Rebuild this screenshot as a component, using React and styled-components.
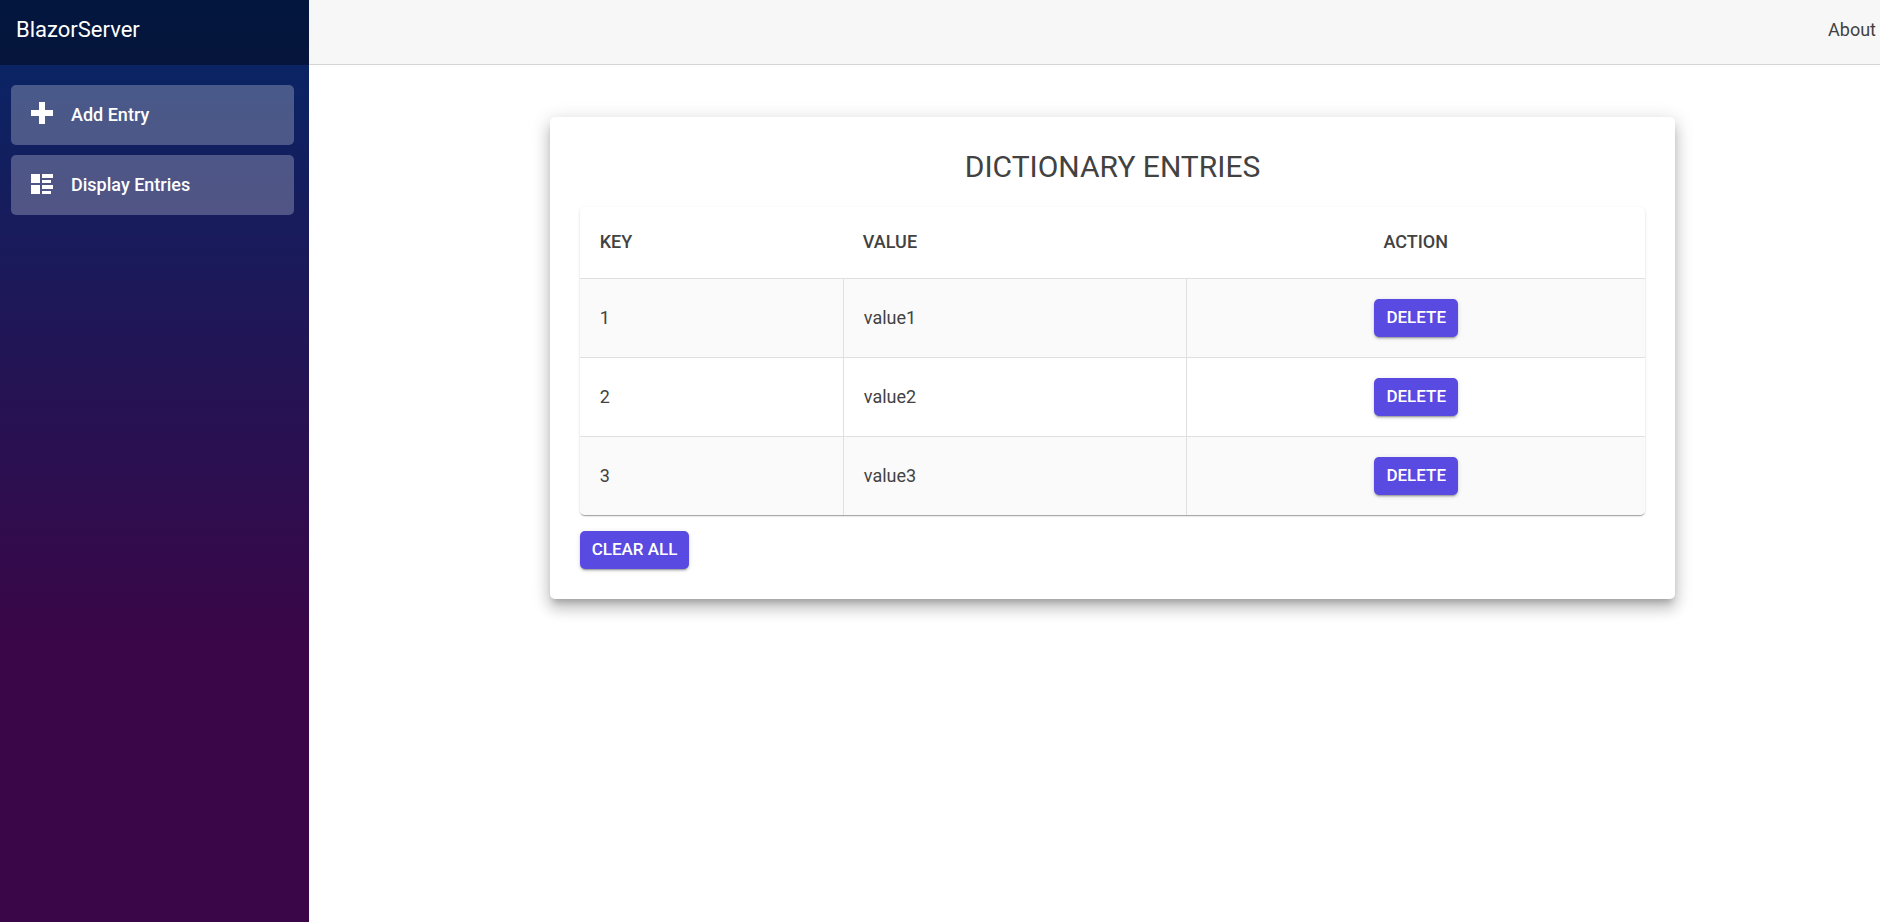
import React, { useState } from "react";
import styled, { createGlobalStyle } from "styled-components";

const GlobalStyle = createGlobalStyle`
  *, *::before, *::after { box-sizing: border-box; }
  body {
    margin: 0;
    background: #fff;
    color: #424242;
    font-family: Roboto, "Liberation Sans", sans-serif;
    font-size: 18px;
    line-height: 24px;
  }
`;

const Page = styled.div`
  display: flex;
  min-height: 100vh;
`;

const Sidebar = styled.aside`
  flex: 0 0 309px;
  background-image: linear-gradient(180deg, rgb(5, 39, 103) 0%, #3a0647 70%);
`;

const Brand = styled.div`
  display: flex;
  align-items: center;
  height: 65px;
  padding: 0 16px 6px;
  background: rgba(0, 0, 0, 0.4);
`;

const BrandLink = styled.a`
  color: #fff;
  font-size: 22px;
  text-decoration: none;
`;

const Nav = styled.nav`
  display: flex;
  flex-direction: column;
  gap: 10px;
  padding: 20px 15px 20px 11px;
`;

const NavItem = styled.a`
  display: flex;
  align-items: center;
  gap: 16px;
  height: 60px;
  padding: 0 18px;
  border-radius: 5px;
  background: rgba(255, 255, 255, 0.25);
  color: #fff;
  font-weight: 500;
  text-decoration: none;
`;

const NavIcon = styled.svg`
  flex: none;
  width: 26px;
  height: 26px;
  fill: currentColor;
`;

const Main = styled.main`
  flex: 1;
  min-width: 0;
`;

const TopRow = styled.header`
  display: flex;
  align-items: center;
  justify-content: flex-end;
  height: 65px;
  padding: 0 4px 5px;
  border-bottom: 1px solid #d6d5d5;
  background: #f7f7f7;
`;

const AboutLink = styled.a`
  color: inherit;
  text-decoration: none;
`;

const Content = styled.div`
  padding: 52px 17px 52px 53px;
`;

const Card = styled.section`
  width: 75%;
  margin: 0 auto;
  padding: 30px;
  border-radius: 5px;
  background: #fff;
  box-shadow:
    0 6px 6px -3px rgba(0, 0, 0, 0.2),
    0 10px 14px 1px rgba(0, 0, 0, 0.14),
    0 4px 18px 3px rgba(0, 0, 0, 0.12);
`;

const Title = styled.h1`
  margin: 0 0 20px;
  font-size: 30px;
  font-weight: 400;
  line-height: 40px;
  text-align: center;
`;

const Table = styled.table`
  width: 100%;
  border-spacing: 0;
  table-layout: fixed;
  overflow: hidden;
  border-radius: 5px;
  box-shadow:
    0 2px 1px -1px rgba(0, 0, 0, 0.2),
    0 1px 1px 0 rgba(0, 0, 0, 0.14),
    0 1px 3px 0 rgba(0, 0, 0, 0.12);
`;

const HeadCell = styled.th`
  width: ${(p) => p.$width};
  height: 71px;
  padding: 0 20px 2px;
  font-weight: 500;
  text-align: ${(p) => p.$align || "left"};
`;

const Row = styled.tr`
  &:nth-child(odd) { background: #fafafa; }
`;

const Cell = styled.td`
  height: 79px;
  padding: 0 20px;
  border-top: 1px solid #e0e0e0;
  text-align: ${(p) => p.$align || "left"};
  & + & { border-left: 1px solid #e0e0e0; }
`;

const Button = styled.button`
  height: 38px;
  padding: 0 12px 2px;
  border: 0;
  border-radius: 5px;
  background: #594ae2;
  color: #fff;
  font: 500 17px/24px Roboto, "Liberation Sans", sans-serif;
  vertical-align: middle;
  cursor: pointer;
  box-shadow:
    0 3px 1px -2px rgba(0, 0, 0, 0.2),
    0 2px 2px 0 rgba(0, 0, 0, 0.14),
    0 1px 5px 0 rgba(0, 0, 0, 0.12);
`;

const Footer = styled.div`
  display: flex;
  margin-top: 16px;
`;

const initialEntries = [
  { key: "1", value: "value1" },
  { key: "2", value: "value2" },
  { key: "3", value: "value3" },
];

export default function App() {
  const [entries, setEntries] = useState(initialEntries);
  const remove = (key) => setEntries(entries.filter((e) => e.key !== key));

  return (
    <>
      <GlobalStyle />
      <Page>
        <Sidebar>
          <Brand>
            <BrandLink href="#">BlazorServer</BrandLink>
          </Brand>
          <Nav>
            <NavItem href="#add">
              <NavIcon viewBox="0 0 26 26" aria-hidden="true">
                <path d="M10 0h6v8h8v6h-8v8h-6v-8H2V8h8z" />
              </NavIcon>
              Add Entry
            </NavItem>
            <NavItem href="#display">
              <NavIcon viewBox="0 0 26 26" aria-hidden="true">
                <path d="M2 2h9v9H2zM13 2h11v4H13zM13 8h9v3h-9zM2 13h9v9H2zM13 13h11v4H13zM13 19h9v3h-9z" />
              </NavIcon>
              Display Entries
            </NavItem>
          </Nav>
        </Sidebar>
        <Main>
          <TopRow>
            <AboutLink href="#about">About</AboutLink>
          </TopRow>
          <Content>
            <Card>
              <Title>DICTIONARY ENTRIES</Title>
              <Table>
                <thead>
                  <tr>
                    <HeadCell scope="col" $width="24.7%">KEY</HeadCell>
                    <HeadCell scope="col" $width="32.2%">VALUE</HeadCell>
                    <HeadCell scope="col" $align="center">ACTION</HeadCell>
                  </tr>
                </thead>
                <tbody>
                  {entries.map((entry) => (
                    <Row key={entry.key}>
                      <Cell>{entry.key}</Cell>
                      <Cell>{entry.value}</Cell>
                      <Cell $align="center">
                        <Button type="button" onClick={() => remove(entry.key)}>
                          DELETE
                        </Button>
                      </Cell>
                    </Row>
                  ))}
                </tbody>
              </Table>
              <Footer>
                <Button type="button" onClick={() => setEntries([])}>
                  CLEAR ALL
                </Button>
              </Footer>
            </Card>
          </Content>
        </Main>
      </Page>
    </>
  );
}
